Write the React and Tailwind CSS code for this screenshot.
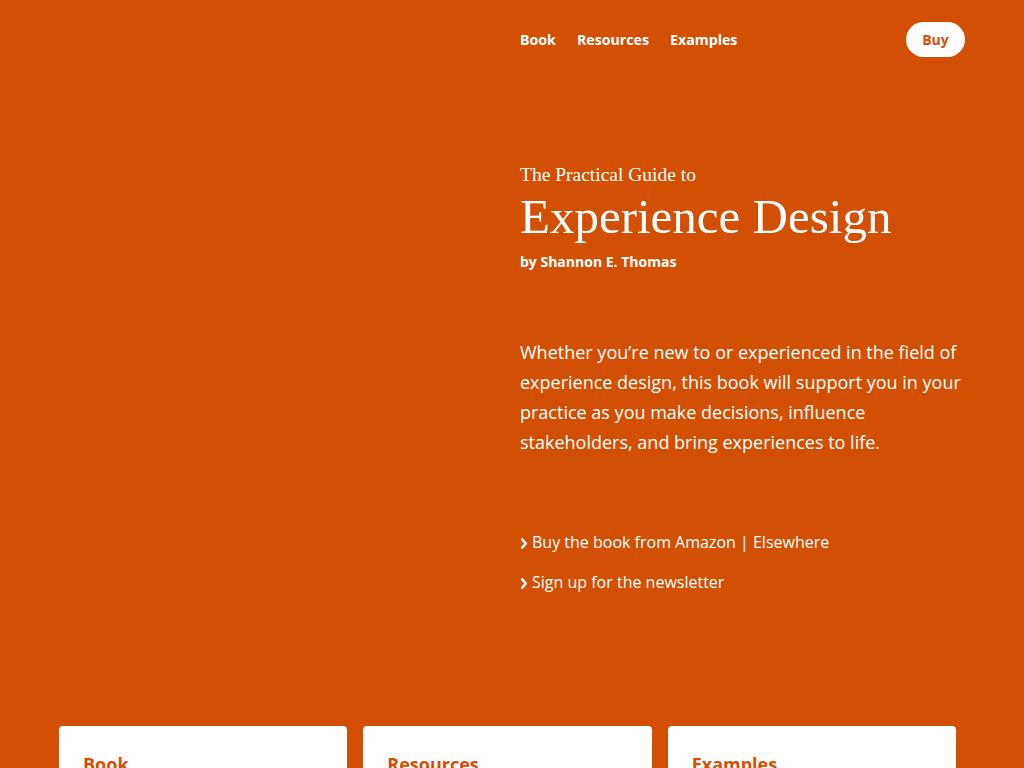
import React from 'react';

const sans = { fontFamily: '"Open Sans", "Noto Sans", sans-serif' };
const serif = { fontFamily: '"Liberation Serif", "DejaVu Serif", serif' };

const NavLink = ({ children }) => (
  <a href="#" className="text-[14.2px] font-bold text-white leading-none pt-[2px]">
    {children}
  </a>
);

const Chevron = () => (
  <svg viewBox="0 0 8 12" className="w-[8px] h-[11px] mr-[4px] inline-block align-[-1px]" fill="none" stroke="currentColor" strokeWidth="2.6" strokeLinecap="round" strokeLinejoin="round">
    <path d="M2 1.5 6 6l-4 4.5" />
  </svg>
);

const Card = ({ title }) => (
  <div className="bg-white rounded-t-[4px] h-[60px] px-6 pt-[29px]">
    <h3 className="text-[18px] font-bold text-[#d24f04] leading-none">{title}</h3>
  </div>
);

export default function App() {
  return (
    <div className="h-[768px] overflow-hidden bg-[#d24f04] text-white" style={sans}>
      <div className="flex">
        <div className="w-[520px] shrink-0" />
        <div className="w-[445px] shrink-0">
          {/* шапка */}
          <header className="flex items-center justify-between pt-[22px]">
            <nav className="flex items-center gap-[21px]">
              <NavLink>Book</NavLink>
              <NavLink>Resources</NavLink>
              <NavLink>Examples</NavLink>
            </nav>
            <a href="#" className="h-[35px] w-[59px] rounded-full bg-white text-[#d24f04] text-[14px] font-bold flex items-center justify-center">
              Buy
            </a>
          </header>

          {/* заголовок */}
          <div className="mt-[106px]">
            <p className="text-[19.5px] leading-[24px]" style={serif}>
              The Practical Guide to
            </p>
            <h1 className="text-[49px] leading-[56px] mt-[2px]" style={serif}>
              Experience Design
            </h1>
            <p className="text-[14px] font-bold leading-[20px] mt-[7px]">by Shannon E. Thomas</p>
          </div>

          <p className="text-[18px] leading-[30px] mt-[65px]">
            Whether you’re new to or experienced in the field of experience design, this book will support you in your practice as you make decisions, influence stakeholders, and bring experiences to life.
          </p>

          <ul className="mt-[73px] flex flex-col gap-[16px] text-[16px] leading-[24px]">
            <li>
              <Chevron />Buy the book from <a href="#">Amazon</a> | <a href="#">Elsewhere</a>
            </li>
            <li>
              <Chevron /><a href="#">Sign up for the newsletter</a>
            </li>
          </ul>
        </div>
      </div>

      {/* карточки */}
      <div className="grid grid-cols-3 gap-4 w-[897px] ml-[59px] mt-[132px]">
        <Card title="Book" />
        <Card title="Resources" />
        <Card title="Examples" />
      </div>
    </div>
  );
}
